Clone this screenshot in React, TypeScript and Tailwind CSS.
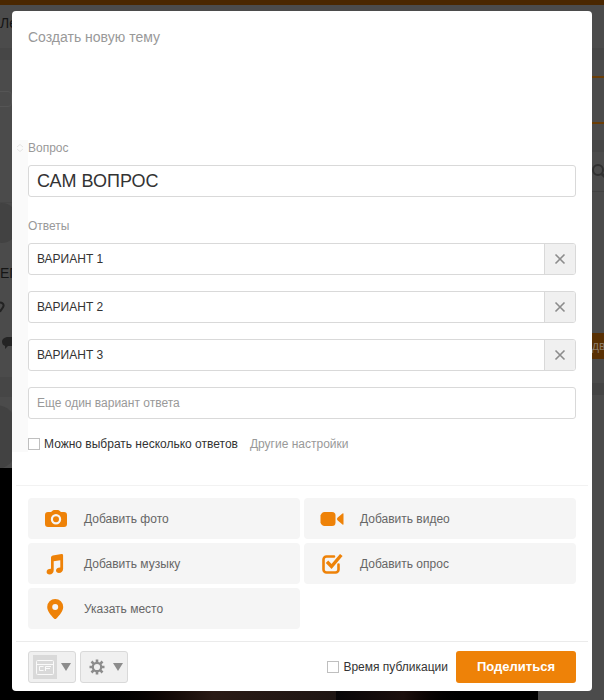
import { useState } from 'react';
import type { ReactNode } from 'react';

const initialOptions = ['ВАРИАНТ 1', 'ВАРИАНТ 2', 'ВАРИАНТ 3'];

function CameraIcon() {
  return (
    <svg className="w-6 h-6" viewBox="0 0 24 24" fill="#ee8208">
      <path
        fillRule="evenodd"
        d="M4 5h3l1.500-1.300Q9.100 3 10 3h4q.9 0 1.500.7L17 5h3a3 3 0 0 1 3 3v9a3 3 0 0 1-3 3H4a3 3 0 0 1-3-3V8a3 3 0 0 1 3-3zM12 7a5.200 5.200 0 1 0 0 10.400A5.200 5.200 0 0 0 12 7zm0 2.200a3 3 0 1 1 0 6 3 3 0 0 1 0-6z"
      />
    </svg>
  );
}

function VideoIcon() {
  return (
    <svg className="w-6 h-6" viewBox="0 0 24 24" fill="#ee8208">
      <path d="M4.500 5H12q3.500 0 3.500 3.500v7q0 3.500-3.500 3.500H4.500Q3 19 2 18t-1.500-2.500v-7Q1 7 2 6t2.500-1z" />
      <path d="M22.500 6.500q1-.7 1 .4v10.200q0 1.100-1 .4l-4.800-4q-1.800-1.500 0-3z" />
    </svg>
  );
}

function MusicIcon() {
  return (
    <svg className="w-6 h-6" viewBox="0 0 24 24" fill="#ee8208">
      <path d="M7 5.500q0-1.800 1.800-2.100L17.500 2q1.600-.2 1.600 1.400v13.300c0 2.600-1.700 4.300-4.200 4.300-1.700 0-2.900-1-2.900-2.500 0-2.100 2-3.200 4.300-3.100V8.200L9.700 9.300v8.900c0 2.500-1.700 4.200-4.200 4.200-1.700 0-2.900-1-2.900-2.500 0-2.100 2-3.200 4.400-3.100z" />
    </svg>
  );
}

function PollIcon() {
  return (
    <svg className="w-6 h-6" viewBox="0 0 24 24" fill="none" stroke="#ee8208">
      <path d="M14 4.500H6.500a3 3 0 0 0-3 3v10a3 3 0 0 0 3 3h9a3 3 0 0 0 3-3v-5" strokeWidth="2.600" strokeLinecap="round" />
      <path d="M7 9.800l4.500 4.700L21.300 3" strokeWidth="3.400" />
    </svg>
  );
}

function PlaceIcon() {
  return (
    <svg className="w-6 h-6" viewBox="0 0 24 24" fill="#ee8208">
      <path
        fillRule="evenodd"
        d="M11.200 2a8 8 0 0 1 8 8c0 4.200-3.500 8-6.800 11.500q-1.200 1.200-2.400 0C6.700 18 3.200 14.200 3.200 10a8 8 0 0 1 8-8zm0 5a3 3 0 1 0 0 6 3 3 0 0 0 0-6z"
      />
    </svg>
  );
}

function CrossIcon() {
  return (
    <svg className="w-3 h-3" viewBox="0 0 12 12" stroke="#8c8c8c" strokeWidth="1.600">
      <path d="M1.500 1.500l9 9M10.500 1.500l-9 9" />
    </svg>
  );
}

function ThemeIcon() {
  return (
    <svg className="w-6 h-6" viewBox="0 0 24 24" fill="none" stroke="#fafafa">
      <rect width="24" height="24" fill="#d9d9d9" stroke="none" />
      <rect x="3.500" y="5.500" width="17" height="14" rx="1" />
      <path d="M3.500 9.500h17" />
      <path d="M10.500 11.500h-4v4h4M12.500 16v-4.500H18M12.500 13.500H17" />
    </svg>
  );
}

function GearIcon() {
  return (
    <svg className="w-4 h-4" viewBox="0 0 16 16" fill="none" stroke="#8c8c8c">
      <circle cx="8" cy="8" r="4.200" strokeWidth="2.200" />
      <path
        d="M8 .5v3M8 12.500v3M.5 8h3M12.500 8h3M2.500 2.500l2.300 2.300M11.200 11.200l2.300 2.300M13.500 2.500l-2.300 2.300M4.800 11.200l-2.300 2.300"
        strokeWidth="2.600"
      />
    </svg>
  );
}

function CaretIcon() {
  return (
    <svg className="w-[10px] h-2" viewBox="0 0 10 8" fill="#8c8c8c">
      <path d="M0 0h10L5 8z" />
    </svg>
  );
}

const actions: { label: string; icon: ReactNode }[] = [
  { label: 'Добавить фото', icon: <CameraIcon /> },
  { label: 'Добавить видео', icon: <VideoIcon /> },
  { label: 'Добавить музыку', icon: <MusicIcon /> },
  { label: 'Добавить опрос', icon: <PollIcon /> },
  { label: 'Указать место', icon: <PlaceIcon /> },
];

// Dimmed group page behind the dialog
function Backdrop() {
  return (
    <div aria-hidden="true" className="absolute inset-0 flex flex-col bg-[#4b4b4b] overflow-hidden">
      <div className="h-[5px] shrink-0 bg-[#4a2700]" />
      <div className="h-[463px] shrink-0 flex justify-between">
        <div className="w-5 overflow-hidden whitespace-nowrap text-[#151515]">
          <div className="h-[43px] pt-2 text-sm">Ле</div>
          <div className="h-3 bg-[#464646]" />
          <div className="h-[62px] flex items-center pt-4">
            <span className="w-4 h-4 -ml-1 rounded-sm border border-[#555555]" />
          </div>
          <div className="h-[81px] border-b border-[#464646]" />
          <div className="h-10 w-7 -ml-3 rounded-full bg-[#424242]" />
          <div className="h-[50px] pt-5 text-sm">ЕГ</div>
          <div className="h-9 pt-2">
            <svg className="w-[5px] h-3" viewBox="0 0 5 12" fill="none" stroke="#222222" strokeWidth="2">
              <path d="M-1 1.500c3 0 5 1 4.500 3.500S1 8 0 11" />
            </svg>
          </div>
          <div className="h-12 pt-2 pl-[2px]">
            <svg className="w-4 h-3" viewBox="0 0 16 12" fill="#242424">
              <path d="M5 0h11v9H6l-3 3V9Q0 8 0 4.500T5 0z" />
            </svg>
          </div>
          <div className="h-5 bg-[#464646]" />
          <div className="h-16 w-10 -ml-6 mt-2 rounded-full bg-[#424242]" />
        </div>
        <div className="w-3 overflow-hidden whitespace-nowrap">
          <div className="h-[43px]" />
          <div className="h-3 bg-[#464646]" />
          <div className="h-4" />
          <div className="h-12 border-y-2 border-[#6b3d05]" />
          <div className="h-4" />
          <div className="h-3 bg-[#464646]" />
          <div className="h-10 pt-3 border-b border-[#424242]">
            <svg className="w-4 h-4" viewBox="0 0 16 16" fill="none" stroke="#303030" strokeWidth="2">
              <circle cx="6" cy="6" r="5" />
              <path d="M10 10l5 5" strokeWidth="3" />
            </svg>
          </div>
          <div className="h-[141px]" />
          <div className="h-[26px] bg-[#593003] text-xs leading-[26px] text-[#8a7a68]">дв</div>
          <div className="h-6" />
          <div className="h-3 bg-[#444444]" />
        </div>
      </div>
      <div className="flex-1 flex mr-[66px] bg-black">
        <div className="w-1/6" />
        <div className="flex-1 bg-gradient-to-r from-black via-[#2a1a15] to-[#1f1614]" />
        <div className="w-1/4 bg-gradient-to-r from-[#080608] via-[#1c0f0d] to-black" />
        <div className="w-1/8" />
      </div>
    </div>
  );
}

function OptionRow({ index, value, onRemove }: { index: number; value: string; onRemove: () => void }) {
  return (
    <div className="flex h-8 border border-[#d9d9d9] rounded-[3px] overflow-hidden">
      <input
        type="text"
        aria-label={`Вариант ответа ${index + 1}`}
        defaultValue={value}
        className="flex-1 min-w-0 px-2 text-xs text-[#333333] outline-none"
      />
      <button
        type="button"
        aria-label="Удалить вариант"
        onClick={onRemove}
        className="w-[31px] flex items-center justify-center border-l border-[#d9d9d9] bg-[#f0f0f0]"
      >
        <CrossIcon />
      </button>
    </div>
  );
}

const checkboxClass = 'appearance-none w-3 h-3 border border-[#bfbfbf] bg-white checked:bg-[#ee8208]';

const menuButtonClass =
  'flex items-center justify-between h-8 w-12 border border-[#d9d9d9] rounded-[3px] bg-[#f0f0f0] pr-1';

export default function App() {
  const [options, setOptions] = useState(initialOptions);

  return (
    <div className="relative min-h-screen pt-[11px] pb-[9px] px-3 font-['Liberation_Sans',Arial,sans-serif] text-xs text-[#333333]">
      <Backdrop />
      <form
        role="dialog"
        aria-label="Создать новую тему"
        onSubmit={(e) => e.preventDefault()}
        className="relative bg-white rounded-[4px]"
      >
        <textarea
          aria-label="Текст темы"
          placeholder="Создать новую тему"
          className="block w-full h-[129px] pt-4 px-4 resize-none text-sm leading-5 placeholder:text-[#999999] outline-none"
        />

        <div className="flex pr-4">
          <div className="w-4 shrink-0 flex flex-col items-center bg-[#fafafa] pt-1">
            <svg className="w-2 h-2" viewBox="0 0 8 8" fill="none" stroke="#e4e4e4">
              <path d="M1 3l3-2.500L7 3M1 5l3 2.500L7 5" />
            </svg>
          </div>
          <div className="flex-1 min-w-0">
            <label htmlFor="question" className="block leading-4 text-[#999999]">
              Вопрос
            </label>
            <input
              id="question"
              type="text"
              defaultValue="САМ ВОПРОС"
              className="block w-full h-8 mt-[9px] px-2 border border-[#d9d9d9] rounded-[3px] text-lg leading-6 outline-none"
            />

            <div className="mt-[21px] leading-4 text-[#999999]">Ответы</div>
            <div className="mt-[9px] flex flex-col gap-4">
              {options.map((option, i) => (
                <OptionRow
                  key={option}
                  index={i}
                  value={option}
                  onRemove={() => setOptions(options.filter((o) => o !== option))}
                />
              ))}
              <input
                type="text"
                aria-label="Еще один вариант ответа"
                placeholder="Еще один вариант ответа"
                className="h-8 px-2 border border-[#d9d9d9] rounded-[3px] placeholder:text-[#999999] outline-none"
              />
            </div>

            <div className="mt-[17px] flex items-center gap-3 leading-4">
              <label className="flex items-center gap-1">
                <input type="checkbox" className={checkboxClass} />
                Можно выбрать несколько ответов
              </label>
              <a href="#settings" className="text-[#999999]">
                Другие настройки
              </a>
            </div>
          </div>
        </div>

        <div className="mt-[33px] mx-1 border-t border-[#f2f2f2]" />
        <div className="grid grid-cols-2 gap-1 px-4 py-3">
          {actions.map((action) => (
            <button
              key={action.label}
              type="button"
              className="flex items-center gap-4 h-[41px] px-4 rounded-[4px] bg-[#f5f5f5] text-[#666666]"
            >
              {action.icon}
              {action.label}
            </button>
          ))}
        </div>

        <div className="flex items-center justify-between mx-1 px-3 pt-[9px] pb-2 border-t border-[#ebebeb]">
          <div className="flex gap-1">
            <button type="button" aria-label="Оформление" className={`${menuButtonClass} pl-1`}>
              <ThemeIcon />
              <CaretIcon />
            </button>
            <button type="button" aria-label="Настройки" className={`${menuButtonClass} pl-2`}>
              <GearIcon />
              <CaretIcon />
            </button>
          </div>
          <div className="flex items-center gap-2">
            <label className="flex items-center gap-1">
              <input type="checkbox" className={checkboxClass} />
              Время публикации
            </label>
            <button type="submit" className="h-8 w-[120px] rounded-[3px] bg-[#ee8208] text-[13px] font-bold text-white">
              Поделиться
            </button>
          </div>
        </div>
      </form>
    </div>
  );
}
